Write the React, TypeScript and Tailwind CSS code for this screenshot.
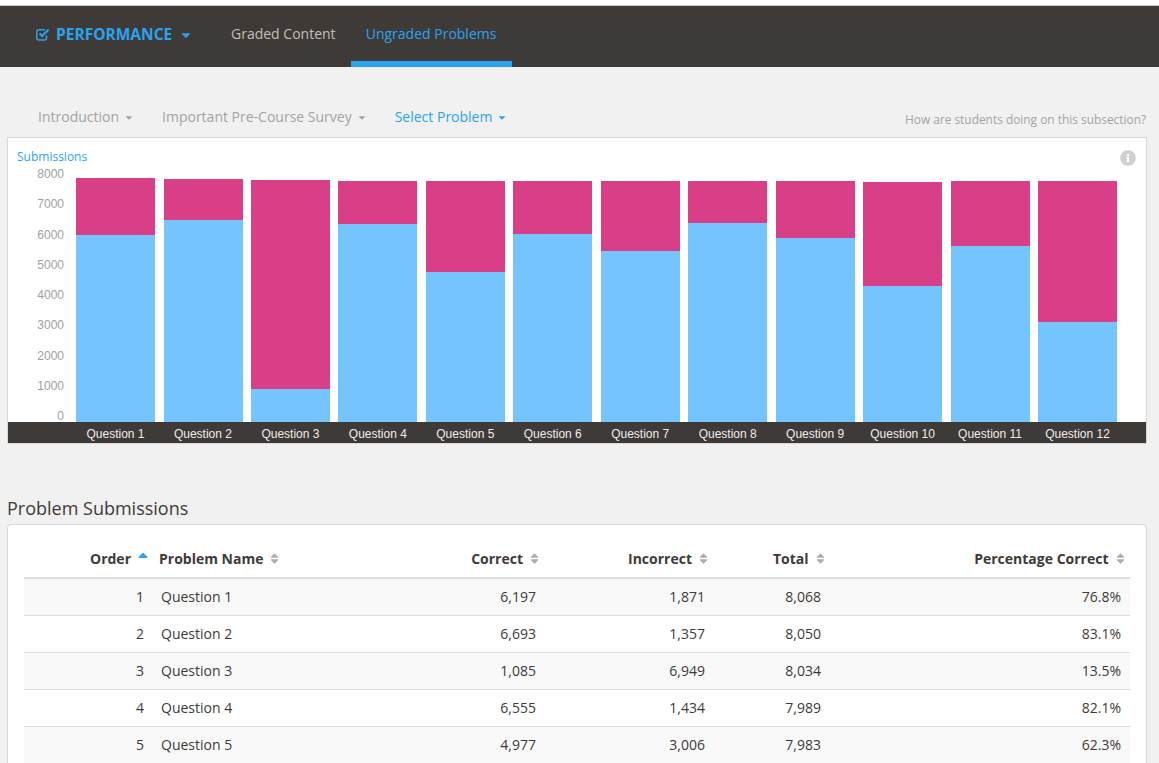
import { FaCaretDown, FaInfoCircle, FaSort, FaSortUp } from 'react-icons/fa';

const bars = [
  { label: 'Question 1', correct: 187, total: 244 },
  { label: 'Question 2', correct: 202, total: 243 },
  { label: 'Question 3', correct: 33, total: 242 },
  { label: 'Question 4', correct: 198, total: 241 },
  { label: 'Question 5', correct: 150, total: 241 },
  { label: 'Question 6', correct: 188, total: 241 },
  { label: 'Question 7', correct: 171, total: 241 },
  { label: 'Question 8', correct: 199, total: 241 },
  { label: 'Question 9', correct: 184, total: 241 },
  { label: 'Question 10', correct: 136, total: 240 },
  { label: 'Question 11', correct: 176, total: 241 },
  { label: 'Question 12', correct: 100, total: 241 },
];

const ticks = ['8000', '7000', '6000', '5000', '4000', '3000', '2000', '1000', '0'];

const rows = [
  { order: 1, name: 'Question 1', correct: '6,197', incorrect: '1,871', total: '8,068', pct: '76.8%' },
  { order: 2, name: 'Question 2', correct: '6,693', incorrect: '1,357', total: '8,050', pct: '83.1%' },
  { order: 3, name: 'Question 3', correct: '1,085', incorrect: '6,949', total: '8,034', pct: '13.5%' },
  { order: 4, name: 'Question 4', correct: '6,555', incorrect: '1,434', total: '7,989', pct: '82.1%' },
  { order: 5, name: 'Question 5', correct: '4,977', incorrect: '3,006', total: '7,983', pct: '62.3%' },
];

function CheckSquare(): JSX.Element {
  return (
    <svg className="mr-[6px] shrink-0" width="14" height="13" viewBox="0 0 14 13" fill="none" stroke="currentColor">
      <path d="M10.5 7.5V10a2 2 0 0 1-2 2H2.8a2 2 0 0 1-2-2V3.8a2 2 0 0 1 2-2H9" strokeWidth="1.5" />
      <path d="M3.6 5.6 6.1 8.1 12.6 1.6" strokeWidth="2.1" />
    </svg>
  );
}

function SubMenu({ label, active }: { label: string; active?: boolean }): JSX.Element {
  return (
    <span className={`flex items-center gap-[6px] ${active ? 'text-[#2aa3ef]' : 'text-[#a3a3a3]'}`}>
      {label}
      <FaCaretDown className="h-[11px] w-[8px]" />
    </span>
  );
}

function SortHeader({ label, sorted, align, pad }: { label: string; sorted?: boolean; align: string; pad: string }): JSX.Element {
  return (
    <th className={`${pad} ${align} pb-[8px] pt-[8px] font-bold`}>
      <span className="inline-flex items-center gap-[7px]">
        {label}
        {sorted ? <FaSortUp className="h-[16px] w-[10px] text-[#2aa3ef]" /> : <FaSort className="h-[13px] w-[9px] text-[#adadad]" />}
      </span>
    </th>
  );
}

export default function App(): JSX.Element {
  return (
    <div className="h-[763px] overflow-hidden bg-[#f1f1f1] font-['Open_Sans',sans-serif] text-[14px] text-[#3e3a37]">
      <div className="h-[6px] border-b border-[#c9c9c9] bg-white" />
      <nav className="flex h-[61px] items-stretch bg-[#3e3a37] pl-[36px]">
        <div className="flex w-[180px] items-center pb-[4px] text-[15.5px] font-bold text-[#2aa3ef]">
          <CheckSquare />
          PERFORMANCE
          <FaCaretDown className="ml-[9px] h-[14px] w-[10px]" />
        </div>
        <div className="flex items-center px-[15px] pb-[6px] text-[#c4bfba]">Graded Content</div>
        <div className="flex w-[161px] items-center justify-center border-b-[6px] border-[#2aa3ef] text-[#2aa3ef]">Ungraded Problems</div>
      </nav>

      <main className="px-[7px] pt-[40px]">
        <div className="flex h-[20px] items-center justify-between pl-[31px] leading-[20px]">
          <div className="flex items-center gap-[29px]">
            <SubMenu label="Introduction" />
            <SubMenu label="Important Pre-Course Survey" />
            <SubMenu label="Select Problem" active />
          </div>
          <span className="w-[247px] shrink-0 pt-[4px] text-[11.9px] text-[#a3a3a3]">How are students doing on this subsection?</span>
        </div>

        <section className="mt-[10px] w-[1140px] border border-[#d8d8d8] bg-white">
          <div className="flex h-[29px] items-start justify-between pl-[9px] pr-[10px] pt-[10px]">
            <span className="text-[12px] leading-[18px] text-[#2aa3ef]">Submissions</span>
            <FaInfoCircle className="mt-[2px] h-[16px] w-[16px] text-[#cfcfcf]" />
          </div>
          <div className="flex h-[255px]">
            <div className="flex h-[256px] w-[56px] flex-col justify-between text-right font-['Liberation_Sans',sans-serif] text-[12px] leading-[14px] text-[#a0a0a0]">
              {ticks.map((tick) => (
                <span key={tick}>{tick}</span>
              ))}
            </div>
            <div className="ml-[12.1px] flex w-[1041px] items-end justify-between">
              {bars.map((bar) => (
                <div key={bar.label} className="flex w-[79px] flex-col" style={{ height: bar.total }}>
                  <div className="flex-1 bg-[#d93f87]" />
                  <div className="bg-[#75c4fd]" style={{ height: bar.correct }} />
                </div>
              ))}
            </div>
          </div>
          <div className="flex h-[21px] items-center bg-[#3e3a37] pl-[68px] pt-[2px] font-['Liberation_Sans',sans-serif] text-[12px] text-[#f0eeec]">
            <div className="flex w-[1041px] justify-between">
              {bars.map((bar) => (
                <span key={bar.label} className="w-[79px] text-center">
                  {bar.label}
                </span>
              ))}
            </div>
          </div>
        </section>

        <h2 className="mt-[52px] text-[18px] leading-[25px] text-[#3e3a37]">Problem Submissions</h2>
        <section className="mt-[3px] w-[1140px] rounded-[4px] border border-[#d8d8d8] bg-white px-[16px] pb-[20px] pt-[15px]">
          <table className="w-[1106px] table-fixed border-collapse">
            <colgroup>
              <col className="w-[129px]" />
              <col className="w-[247px]" />
              <col className="w-[145px]" />
              <col className="w-[169px]" />
              <col className="w-[116px]" />
              <col className="w-[300px]" />
            </colgroup>
            <thead>
              <tr className="border-b-2 border-[#dddddd]">
                <SortHeader label="Order" sorted align="text-right" pad="pr-[5px]" />
                <SortHeader label="Problem Name" align="text-left" pad="pl-[6px]" />
                <SortHeader label="Correct" align="text-right" pad="pr-[6px]" />
                <SortHeader label="Incorrect" align="text-right" pad="pr-[6px]" />
                <SortHeader label="Total" align="text-right" pad="pr-[5.5px]" />
                <SortHeader label="Percentage Correct" align="text-right" pad="pr-[5.5px]" />
              </tr>
            </thead>
            <tbody>
              {rows.map((row) => (
                <tr key={row.order} className="h-[37px] border-b border-[#dddddd] odd:bg-[#f9f9f9]">
                  <td className="pr-[9px] text-right">{row.order}</td>
                  <td className="pl-[8px]">{row.name}</td>
                  <td className="pr-[9px] text-right">{row.correct}</td>
                  <td className="pr-[9px] text-right">{row.incorrect}</td>
                  <td className="pr-[9px] text-right">{row.total}</td>
                  <td className="pr-[9px] text-right">{row.pct}</td>
                </tr>
              ))}
            </tbody>
          </table>
        </section>
      </main>
    </div>
  );
}
